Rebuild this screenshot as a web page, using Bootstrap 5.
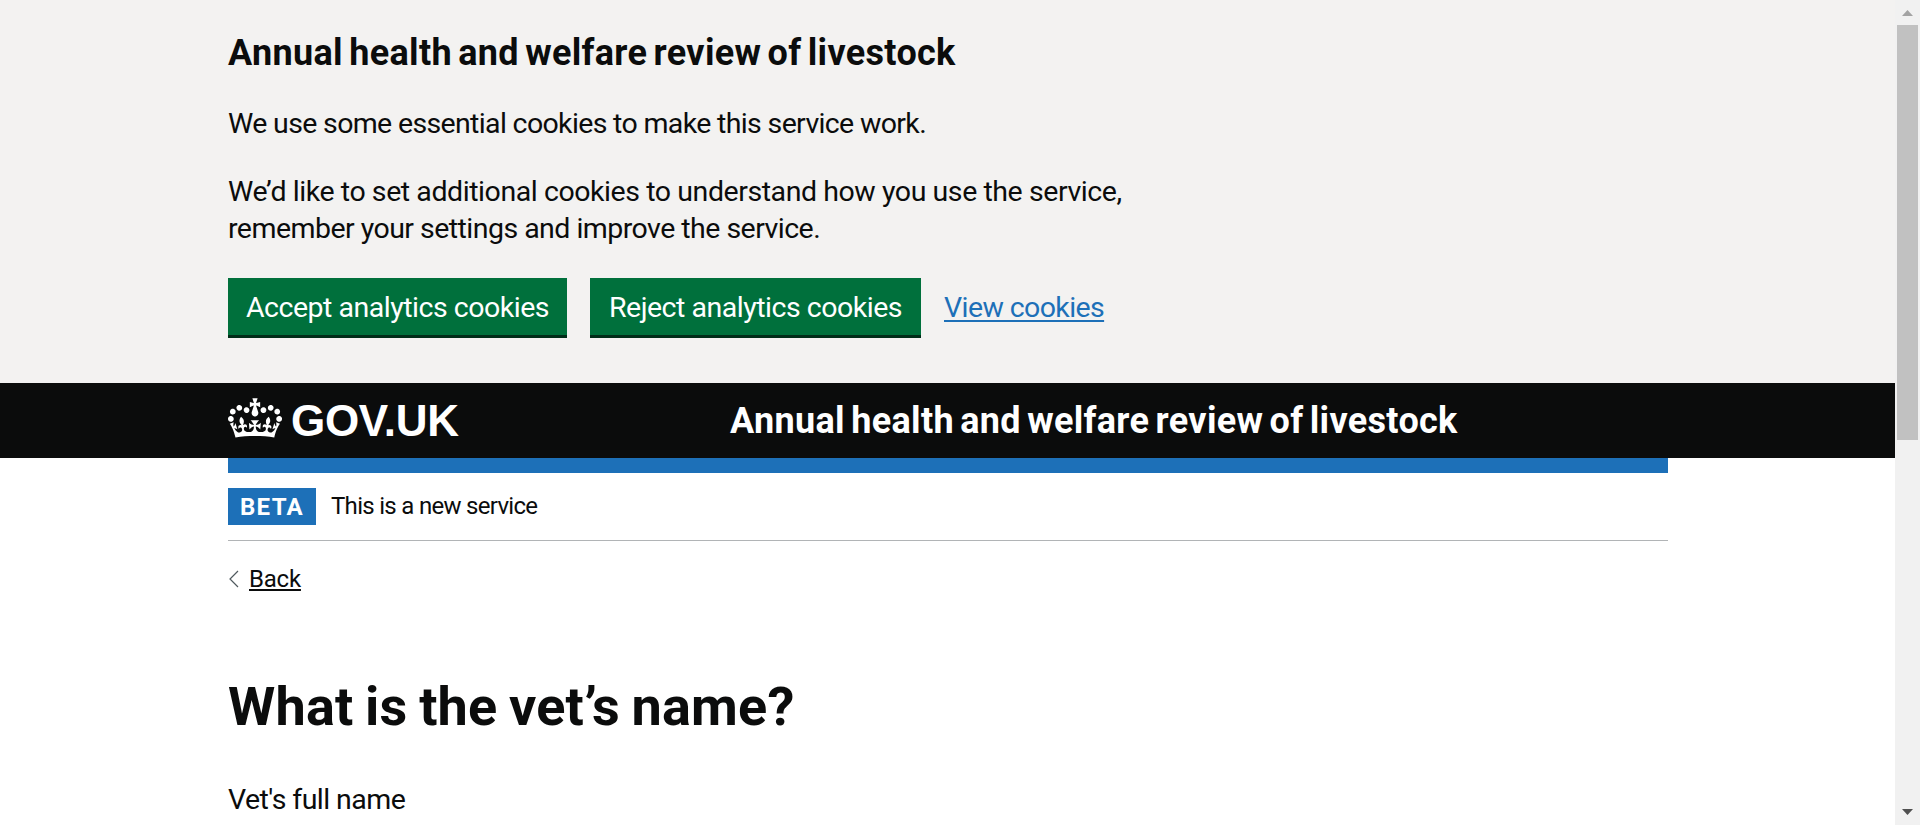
<!DOCTYPE html>
<html lang="en">
<head>
<meta charset="utf-8">
<title>What is the vet’s name?</title>
<link href="https://cdn.jsdelivr.net/npm/bootstrap@5.3.0/dist/css/bootstrap.min.css" rel="stylesheet">
<style>
  body { font-family: Roboto, "Liberation Sans", sans-serif; color: #0b0c0c; height: 825px; overflow: hidden; font-size: 28.5px; line-height: 37.5px; letter-spacing: -.65px; }
  .page-width { width: 1440px; margin-left: 228px; }
  .cookie-banner { background: #f3f2f1; height: 383px; padding-top: 31px; }
  .banner-title { font-size: 36px; line-height: 45px; font-weight: 700; letter-spacing: .33px; word-spacing: -3px; margin-bottom: 29px; }
  .cookie-banner p { margin-bottom: 30px; }
  .line-one { letter-spacing: -.43px; }
  .line-two { letter-spacing: -.53px; }
  .btn-gov { --bs-btn-color: #fff; --bs-btn-bg: #00703c; --bs-btn-hover-color: #fff; --bs-btn-hover-bg: #005a30; height: 57px; margin-top: .5px; border: 0; border-radius: 0; padding: 3px 0 0; font-size: 28.5px; line-height: 1; letter-spacing: -.48px; box-shadow: 0 3px 0 #002d18; }
  .btn-accept { width: 339px; margin-right: 23px; }
  .btn-reject { width: 331px; margin-right: 23px; }
  .view-link { color: #1d70b8; letter-spacing: -.6px; padding-top: 2px; text-decoration-thickness: 2px; text-underline-offset: 3px; }
  .site-header { background: #0b0c0c; height: 75px; color: #fff; }
  .crown { width: 54px; height: 40px; margin: 0 9px 5px 0; }
  .logo-link { width: 502px; height: 75px; color: #fff; }
  .logotype { font-family: "Liberation Sans", sans-serif; font-size: 44px; line-height: 75px; font-weight: 700; letter-spacing: -.3px; }
  .service-name { font-size: 36px; line-height: 77px; font-weight: 700; letter-spacing: .33px; word-spacing: -3px; height: 75px; }
  .blue-bar { height: 15px; background: #1d70b8; }
  .phase { height: 68px; border-bottom: 1px solid #b1b4b6; font-size: 24px; padding-top: 15px; }
  .phase-tag { width: 88px; height: 37px; background: #1d70b8; color: #fff; font-weight: 700; letter-spacing: 1.3px; line-height: 38px; padding-left: 12px; margin-right: 15px; }
  .phase-text { line-height: 37px; letter-spacing: -.7px; }
  .back { margin-top: 23px; font-size: 24px; line-height: 30px; letter-spacing: -.2px; }
  .back svg { width: 12px; height: 18px; margin-right: 9px; }
  .back a { color: #0b0c0c; text-decoration-thickness: 2px; text-underline-offset: 2px; }
  .question { font-size: 54px; line-height: 58px; font-weight: 700; letter-spacing: .2px; word-spacing: -2px; margin: 84px 0 45px; }
  .name-label { letter-spacing: -.55px; }
  .scroll-track { width: 25px; background: #f1f1f1; padding: 10px 0; }
  .scroll-thumb { width: 21px; height: 415px; background: #c1c1c1; margin: 9px 0 auto; }
</style>
</head>
<body class="d-flex bg-white">
<div class="flex-grow-1">
  <section class="cookie-banner">
    <div class="page-width">
      <h2 class="banner-title">Annual health and welfare review of livestock</h2>
      <p>We use some essential cookies to make this service work.</p>
      <p><span class="line-one">We’d like to set additional cookies to understand how you use the service,</span><br><span class="line-two">remember your settings and improve the service.</span></p>
      <div class="d-flex">
        <button class="btn btn-gov btn-accept" type="button">Accept analytics cookies</button>
        <button class="btn btn-gov btn-reject" type="button">Reject analytics cookies</button>
        <a class="view-link align-self-center" href="#">View cookies</a>
      </div>
    </div>
  </section>
  <header class="site-header">
    <div class="page-width d-flex">
      <a class="logo-link d-flex align-items-center text-decoration-none" href="#">
        <svg class="crown" viewBox="0 0 132 97" fill="#fff" aria-hidden="true"><path fill-rule="evenodd" d="M25 30.2c3.5 1.5 7.7-.2 9.1-3.7 1.5-3.6-.2-7.8-3.9-9.2-3.6-1.4-7.6.3-9.1 3.9-1.4 3.5.3 7.5 3.9 9zM9 39.5c3.6 1.5 7.8-.2 9.2-3.7 1.5-3.6-.2-7.8-3.9-9.1-3.6-1.5-7.6.2-9.1 3.8-1.4 3.5.3 7.5 3.8 9zM4.4 57.2c3.5 1.5 7.7-.2 9.1-3.8 1.5-3.6-.2-7.7-3.9-9.1-3.5-1.5-7.6.3-9.1 3.8-1.4 3.5.3 7.6 3.9 9.1zm38.3-21.4c3.5 1.5 7.7-.2 9.1-3.8 1.5-3.6-.2-7.7-3.9-9.1-3.6-1.5-7.6.3-9.1 3.8-1.3 3.6.4 7.7 3.9 9.1zm64.4-5.6c-3.6 1.5-7.8-.2-9.1-3.7-1.5-3.6.2-7.8 3.8-9.2 3.6-1.4 7.7.3 9.2 3.9 1.3 3.5-.4 7.5-3.9 9zm15.9 9.3c-3.6 1.5-7.7-.2-9.1-3.7-1.5-3.6.2-7.8 3.7-9.1 3.6-1.5 7.7.2 9.2 3.8 1.5 3.5-.3 7.5-3.8 9zm4.7 17.7c-3.6 1.5-7.8-.2-9.2-3.8-1.5-3.6.2-7.7 3.9-9.1 3.6-1.5 7.7.3 9.2 3.8 1.3 3.5-.4 7.6-3.9 9.1zM89.3 35.8c-3.6 1.5-7.8-.2-9.2-3.8-1.4-3.6.2-7.7 3.9-9.1 3.6-1.5 7.7.3 9.2 3.8 1.4 3.6-.3 7.7-3.9 9.1zM69.7 17.7l8.9 4.7V9.3l-8.9 2.8c-.2-.3-.5-.6-.9-.9L72.4 0H59.6l3.5 11.2c-.3.3-.6.5-.9.9l-8.8-2.8v13.1l8.8-4.7c.3.3.6.7.9.9l-5 15.4v.1c-.2.8-.4 1.6-.4 2.4 0 4.1 3.1 7.5 7 8.1h.2c.3 0 .7.1 1 .1.4 0 .7 0 1-.1h.2c4-.6 7.1-4.1 7.1-8.1 0-.8-.1-1.7-.4-2.4V34l-5.1-15.4c.4-.2.7-.6 1-.9zM66 92.8c16.9 0 32.8 1.1 47.1 3.2 4-16.9 8.9-26.7 14-33.5l-9.6-3.4c1 4.9 1.1 7.2 0 10.2-1.5-1.4-3-4.3-4.2-8.7L108.6 76c2.8-2 5-3.2 7.5-3.3-4.4 9.4-10 11.9-13.6 11.2-4.3-.8-6.3-4.6-5.6-7.9 1-4.7 5.7-5.9 8-.5 4.3-8.7-3-11.4-7.6-8.8 7.1-7.2 7.9-13.5 2.1-21.1-8 6.1-8.1 12.3-4.5 20.8-4.7-5.4-12.1-2.5-9.5 6.2 3.4-5.2 7.9-2 7.2 3.1-.6 4.3-6.4 7.8-13.5 7.2-10.3-.9-10.9-8-11.2-13.8 2.5-.5 7.1 1.8 11 7.3L80.2 60c-4.1 4.4-8 5.3-12.3 5.4 1.4-4.4 8-11.6 8-11.6H55.5s6.4 7.2 7.9 11.6c-4.2-.1-8-1-12.3-5.4l1.4 16.4c3.9-5.5 8.5-7.7 10.9-7.3-.3 5.8-.9 12.8-11.1 13.8-7.2.6-12.9-2.9-13.5-7.2-.7-5 3.8-8.3 7.1-3.1 2.7-8.7-4.6-11.6-9.4-6.2 3.7-8.5 3.6-14.7-4.6-20.8-5.8 7.6-5 13.9 2.2 21.1-4.7-2.6-11.9.1-7.7 8.8 2.3-5.5 7.1-4.2 8.1.5.7 3.3-1.3 7.1-5.7 7.9-3.5.7-9-1.8-13.5-11.2 2.5.1 4.7 1.3 7.5 3.3l-4.7-15.4c-1.2 4.4-2.7 7.2-4.3 8.7-1.1-3-.9-5.3 0-10.2l-9.5 3.4c5 6.9 9.9 16.7 14 33.5 14.8-2.1 30.8-3.2 47.7-3.2z"/></svg>
        <span class="logotype">GOV.UK</span>
      </a>
      <span class="service-name">Annual health and welfare review of livestock</span>
    </div>
  </header>
  <div class="page-width">
    <div class="blue-bar"></div>
    <div class="phase d-flex">
      <strong class="phase-tag">BETA</strong>
      <span class="phase-text">This is a new service</span>
    </div>
    <div class="back d-flex align-items-center">
      <svg viewBox="0 0 12 18" fill="none" stroke="#505a5f" stroke-width="1.2" aria-hidden="true"><path d="M10 1 2 9l8 8"/></svg>
      <a href="#">Back</a>
    </div>
    <h1 class="question">What is the vet’s name?</h1>
    <div class="name-label">Vet's full name</div>
  </div>
</div>
<div class="scroll-track d-flex flex-column align-items-center flex-shrink-0">
  <svg width="11" height="6" aria-hidden="true"><path d="M0 6 5.500 0 11 6z" fill="#a3a3a3"/></svg>
  <div class="scroll-thumb"></div>
  <svg width="11" height="6" aria-hidden="true"><path d="M0 0h11L5.500 6z" fill="#505050"/></svg>
</div>
<script src="https://cdn.jsdelivr.net/npm/bootstrap@5.3.0/dist/js/bootstrap.bundle.min.js"></script>
</body>
</html>
